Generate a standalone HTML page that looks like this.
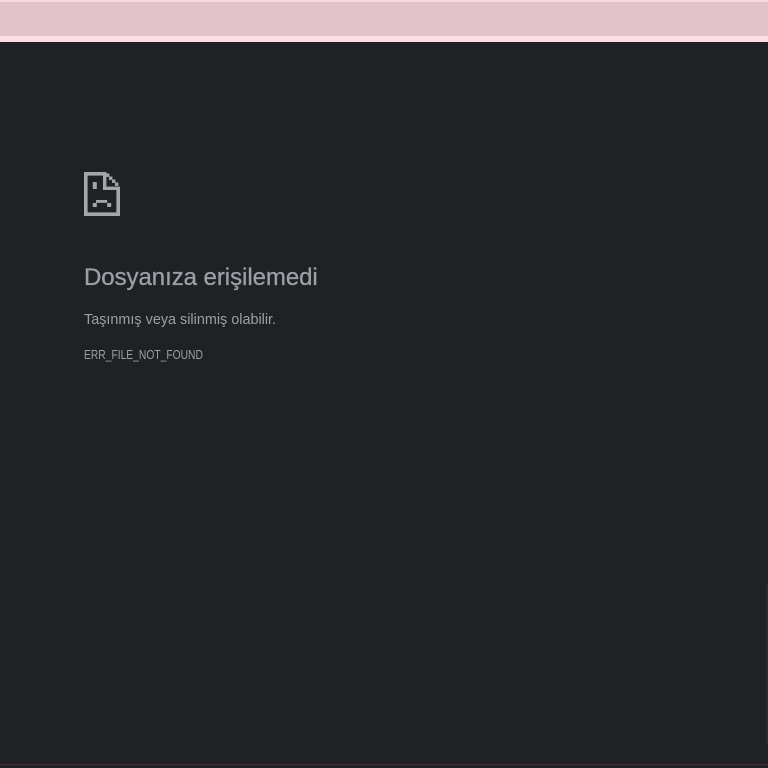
<!DOCTYPE html>
<html lang="tr">
<head>
<meta charset="utf-8">
<title>Dosyanıza erişilemedi</title>
<style>
html,body{margin:0;padding:0;width:768px;height:768px;overflow:hidden;background:#202124}
body{position:relative;font-family:"Liberation Sans","DejaVu Sans",sans-serif}
.b{position:absolute;left:0;width:768px}
.t{position:absolute;left:84px;white-space:nowrap;margin:0;font-weight:400;transform-origin:left center;filter:blur(.25px)}
h1.t{top:264px;font-size:24px;line-height:28px;color:#9aa0a6;font-weight:400;letter-spacing:-.05px;-webkit-text-stroke:.3px #9aa0a6}
p.t{top:310px;font-size:15px;line-height:20px;color:#9aa0a6;transform:scaleX(.96)}
div.t{top:347px;font-size:12.5px;line-height:16px;color:#9aa0a6;transform:scaleX(.823)}
</style>
</head>
<body>
<div class="b" style="top:0;height:2px;background:#fbd9e1"></div>
<div class="b" style="top:2px;height:34px;background:#e2c3c9"></div>
<div class="b" style="top:36px;height:6px;background:#fedde6"></div>
<div class="b" style="top:42px;height:1px;background:#1b1c1e"></div>
<svg style="position:absolute;left:0;top:0" width="768" height="768" viewBox="0 0 768 768">
<g fill="#a4a7aa" style="filter:blur(.35px)">
<rect x="84" y="172" width="22" height="3.6"/>
<rect x="84" y="172" width="3.6" height="44"/>
<rect x="84" y="212.4" width="36" height="3.6"/>
<rect x="116.4" y="187" width="3.6" height="29"/>
<rect x="103" y="172" width="3.4" height="18"/>
<rect x="103" y="186.6" width="17" height="3.4"/>
<rect x="106" y="173.5" width="3.4" height="3.4"/>
<rect x="109" y="176.5" width="3.4" height="3.4"/>
<rect x="112" y="179.5" width="3.4" height="3.4"/>
<rect x="115" y="182.5" width="3.4" height="3.4"/>
<rect x="92.8" y="182" width="4" height="7"/>
<rect x="96" y="200" width="11.2" height="2.8"/>
<rect x="92.8" y="203" width="4" height="4"/>
<rect x="107.2" y="203" width="4" height="4"/>
</g>
<rect x="766" y="584" width="2" height="160" fill="#2a2b2e"/>
<rect x="0" y="764" width="768" height="1.5" fill="#3f2b2b"/>
</svg>
<h1 class="t">Dosyanıza erişilemedi</h1>
<p class="t">Taşınmış veya silinmiş olabilir.</p>
<div class="t">ERR_FILE_NOT_FOUND</div>
</body>
</html>
